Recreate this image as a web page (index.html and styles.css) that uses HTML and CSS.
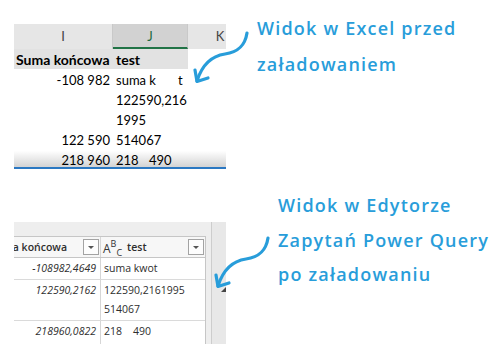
FILE: index.html
```html
<!DOCTYPE html>
<html lang="pl">
<head>
<meta charset="utf-8">
<title>Widok w Excel i Power Query</title>
<link rel="stylesheet" href="styles.css">
</head>
<body>
<section class="scene scene-excel">
  <div class="xl">
    <div class="xl-row xl-head">
      <div class="c ci">I</div>
      <div class="c cj sel">J</div>
      <div class="c ck">K</div>
    </div>
    <div class="xl-row xl-title">
      <div class="c ci">Suma końcowa</div>
      <div class="c cj">test</div>
    </div>
    <div class="xl-row">
      <div class="c ci num">-108 982</div>
      <div class="c cj"><span class="w-sumak">suma k</span>t</div>
    </div>
    <div class="xl-row">
      <div class="c ci num"></div>
      <div class="c cj">122590,216</div>
    </div>
    <div class="xl-row">
      <div class="c ci num"></div>
      <div class="c cj">1995</div>
    </div>
    <div class="xl-row">
      <div class="c ci num">122 590</div>
      <div class="c cj">514067</div>
    </div>
    <div class="xl-row xl-last">
      <div class="c ci num">218 960</div>
      <div class="c cj"><span class="w-218">218</span>490</div>
    </div>
  </div>
  <p class="note note-top">Widok w Excel przed<br>załadowaniem</p>
  <svg class="arrow" viewBox="0 0 62 58" aria-hidden="true">
    <path d="M57 5 C55 18 48 24 35 26 C21 28 12 37 7 53"/>
    <path d="M5 42 L7 53.5 L18 50"/>
  </svg>
</section>

<section class="scene scene-pq">
  <div class="pq">
    <div class="pq-table">
      <div class="pq-head">
        <div class="pc p1"><span class="hname hname-1">Suma końcowa</span><span class="filter"></span></div>
        <div class="pc p2"><span class="abc"><span class="abc-a">A</span><span class="abc-b">B</span><span class="abc-c">C</span></span><span class="hname hname-2">test</span><span class="filter"></span></div>
      </div>
      <div class="pr pr-1">
        <div class="pc p1">-108982,4649</div>
        <div class="pc p2"><span>suma kwot</span></div>
      </div>
      <div class="pr pr-2">
        <div class="pc p1">122590,2162</div>
        <div class="pc p2"><span>122590,2161995</span><span>514067</span></div>
      </div>
      <div class="pr pr-3">
        <div class="pc p1">218960,0822</div>
        <div class="pc p2"><span><span class="w-218pq">218</span>490</span></div>
      </div>
    </div>
    <div class="pq-scroll"><span class="grip"></span></div>
  </div>
  <p class="note note-bottom">Widok w Edytorze<br>Zapytań Power Query<br>po załadowaniu</p>
  <svg class="arrow" viewBox="0 0 62 58" aria-hidden="true">
    <path d="M57 5 C55 18 48 24 35 26 C21 28 12 37 7 53"/>
    <path d="M5 42 L7 53.5 L18 50"/>
  </svg>
</section>
</body>
</html>
```

FILE: styles.css
```css
html, body {
  margin: 0;
  padding: 0;
  background: #ffffff;
}
body {
  width: 500px;
  height: 344px;
  overflow: hidden;
  font-family: Lato, "Liberation Sans", sans-serif;
}

.scene {
  position: relative;
  display: flex;
  align-items: flex-start;
}
.scene-excel { height: 180px; }
.scene-pq { height: 164px; }

/* ---------- Excel grid ---------- */
.xl {
  margin: 24px 0 0 14px;
  width: 212px;
  flex: none;
  overflow: hidden;
  font-family: Lato, "Liberation Sans", sans-serif;
  font-size: 13px;
  color: #000;
}
.xl-row {
  display: flex;
  height: 20px;
  line-height: 22px;
}
.c {
  flex: none;
  box-sizing: border-box;
  white-space: pre;
  overflow: hidden;
  height: 100%;
}
.ci { width: 99px; }
.cj { width: 75px; padding-left: 3px; }
.ck { width: 64px; }

.xl-head {
  height: 25px;
  line-height: 24px;
  background: #e6e6e6;
  color: #444;
}
.xl-head .c {
  text-align: center;
  padding: 0;
  border-right: 1px solid #c9c9c9;
}
.xl-head .ck { border-right: 0; }
.xl-head .sel {
  background: #d2d2d2;
  color: #1d6b40;
  border-bottom: 2px solid #217346;
}

.xl-title { font-weight: 700; font-size: 14px; }
.xl-title .c { background: #e2e2e2; }
.xl-title .ci { padding-left: 2px; }

.num { text-align: right; padding-right: 3px; }

.w-sumak { display: inline-block; width: 62px; }
.w-218 { display: inline-block; width: 33px; }

.xl-last {
  height: 20px;
  box-sizing: border-box;
  background: linear-gradient(to bottom, #ffffff 0%, #ffffff 10%, #d3d3d3 100%);
  border-bottom: 2px solid #2b78c2;
}

/* ---------- annotations ---------- */
.note {
  margin: 0;
  font-family: "Open Sans", "DejaVu Sans", sans-serif;
  font-weight: 600;
  font-size: 18px;
  letter-spacing: 1.2px;
  color: #289dda;
  white-space: nowrap;
}
.note-top {
  margin: 10px 0 0 31px;
  line-height: 36px;
}
.note-bottom {
  margin: 8px 0 0 52px;
  line-height: 34.5px;
}

.arrow {
  position: absolute;
  left: 190px;
  top: 28px;
  width: 62px;
  height: 58px;
  overflow: visible;
  fill: none;
  stroke: #289dda;
  stroke-width: 3.2;
  stroke-linecap: round;
  stroke-linejoin: round;
}
.scene-pq .arrow {
  left: 211px;
  top: 53px;
}

/* ---------- Power Query grid ---------- */
.pq {
  margin: 42px 0 0 14px;
  width: 212px;
  height: 122px;
  flex: none;
  display: flex;
  overflow: hidden;
  background: #eeeeee;
  font-family: "Open Sans", "DejaVu Sans", sans-serif;
  font-size: 10.5px;
  color: #2e2e2e;
}
.pq-table {
  margin-top: 14px;
  width: 192px;
  flex: none;
  box-sizing: border-box;
  background: #fff;
  border-top: 1px solid #c6c6c6;
  border-right: 1px solid #c6c6c6;
}
.pq-head {
  display: flex;
  height: 21px;
  box-sizing: border-box;
  background: #f7f7f7;
  border-bottom: 1px solid #c6c6c6;
  font-weight: 600;
}
.pc {
  flex: none;
  box-sizing: border-box;
  display: flex;
  overflow: hidden;
  white-space: nowrap;
}
.p1 {
  width: 87px;
  border-right: 1px solid #d6d6d6;
  justify-content: flex-end;
}
.p2 { width: 104px; }

.pq-head .pc { align-items: center; }
.pq-head .p1 { padding-right: 1px; }
.pq-head .p2 { padding: 0 1px 0 2px; }
.hname { flex: none; }
.hname-1 { margin-right: 16px; }
.hname-2 { margin-left: 5px; }

.filter {
  flex: none;
  width: 16px;
  height: 16px;
  box-sizing: border-box;
  border: 1px solid #a3a3a3;
  background: #fdfdfd;
  display: flex;
  align-items: center;
  justify-content: center;
}
.p2 .filter { margin-left: auto; }
.filter::after {
  content: "";
  width: 0;
  height: 0;
  border-left: 3px solid transparent;
  border-right: 3px solid transparent;
  border-top: 3px solid #555;
}

.abc {
  flex: none;
  display: flex;
  height: 19px;
  font-weight: 400;
  color: #333;
}
.abc-a {
  align-self: center;
  font-size: 12px;
  line-height: 12px;
  margin-top: 4px;
}
.abc-b {
  align-self: flex-start;
  font-size: 9px;
  line-height: 9px;
  margin-top: 1px;
}
.abc-c {
  align-self: flex-end;
  font-size: 9px;
  line-height: 9px;
}

.pr {
  display: flex;
  border-bottom: 1px solid #dadada;
  line-height: 19px;
}
.pr .p1 {
  align-items: flex-start;
  font-style: italic;
  padding: 1px 4px 0 0;
}
.pr .p2 {
  flex-direction: column;
  align-items: flex-start;
  padding: 1px 0 0 3px;
}
.pr-1 { height: 22px; box-sizing: border-box; }
.pr-2 { height: 41px; box-sizing: border-box; }
.pr-3 { height: 40px; box-sizing: border-box; }
.w-218pq { display: inline-block; width: 29px; }

.pq-scroll {
  flex: 1;
  margin-left: 5px;
  border-left: 1px solid #cdcdcd;
  background: #e8e8e8;
  display: flex;
  flex-direction: column;
  align-items: flex-end;
}
.grip {
  margin-top: 65px;
  width: 0;
  height: 0;
  border-style: solid;
  border-width: 0 0 5px 5px;
  border-color: transparent transparent #444 transparent;
}
```
